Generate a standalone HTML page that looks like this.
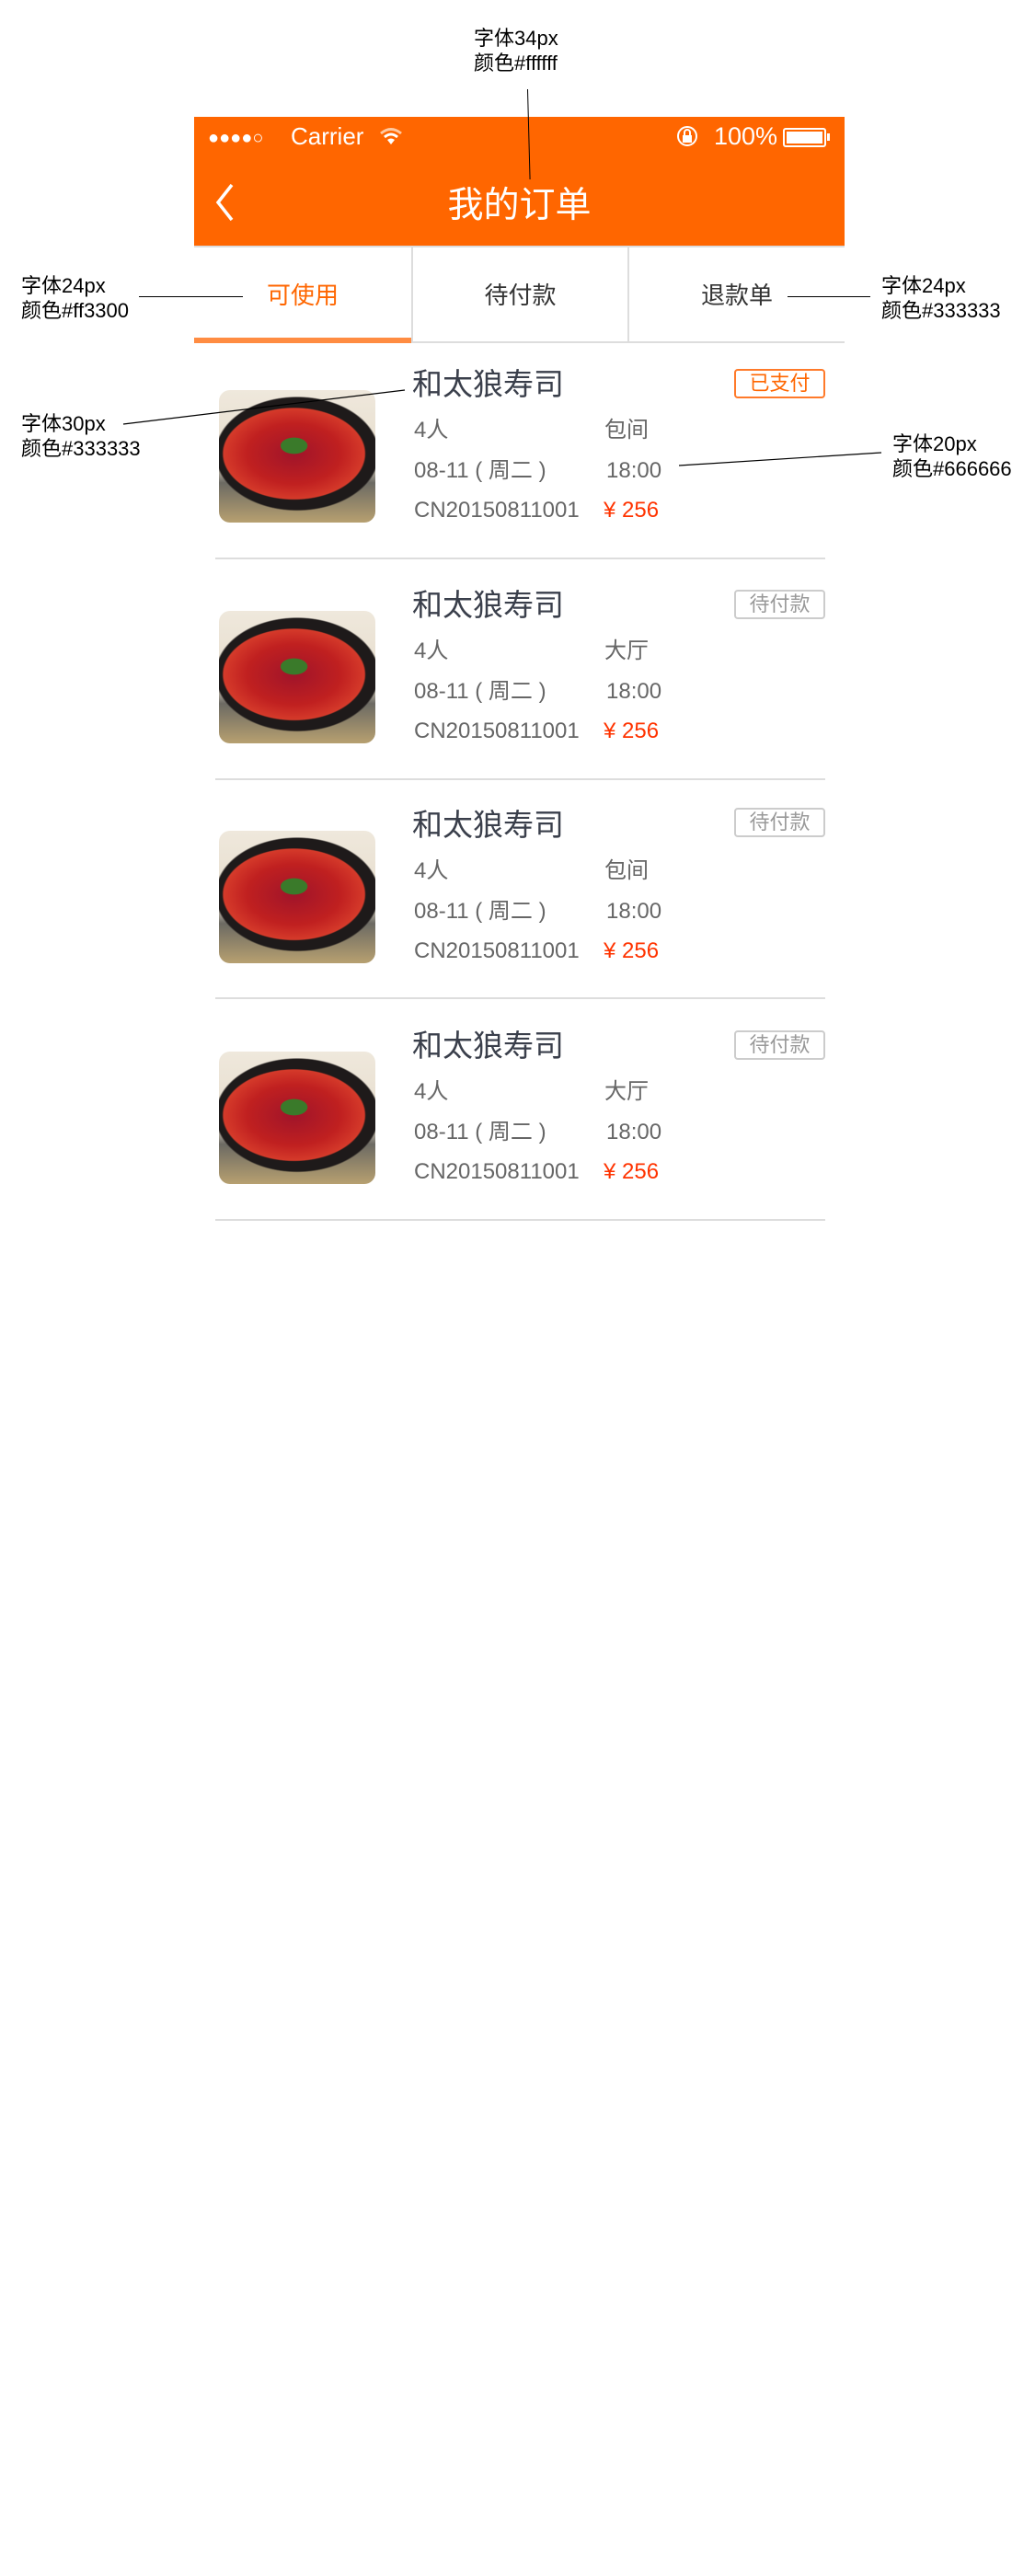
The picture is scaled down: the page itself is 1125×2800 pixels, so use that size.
<!DOCTYPE html>
<html><head><meta charset="utf-8"><style>
*{margin:0;padding:0;box-sizing:border-box}
body{width:1125px;height:2800px;background:#fff;position:relative;overflow:hidden;font-family:"Liberation Sans","Noto Sans CJK SC",sans-serif}
.a{position:absolute;white-space:nowrap}
.ann{position:absolute;font-size:22px;line-height:27px;color:#000;font-family:"Liberation Sans","Noto Sans CJK SC",sans-serif}
.ln{position:absolute;background:#000;height:1px;transform-origin:0 0}
.hdr{position:absolute;left:211px;top:127px;width:707px;height:140px;background:#ff6600}
.tabs{position:absolute;left:211px;top:267px;width:707px;height:106px;border-bottom:2px solid #ddd;border-top:2px solid #ddd}
.tab{position:absolute;top:0;height:104px;font-size:26px;line-height:104px;text-align:center;color:#333}
.food{position:absolute;width:170px;height:144px;border-radius:12px;overflow:hidden;
background:radial-gradient(ellipse 42% 30% at 48% 42%,#3a7a2a 0,#3a7a2a 20%,transparent 21%),
radial-gradient(ellipse 50% 38% at 48% 48%,#a0142a 0,#c02020 60%,#d53a2a 90%,transparent 92%),
radial-gradient(ellipse 56% 46% at 50% 48%,#1e1a1a 0,#1e1a1a 92%,transparent 94%),
linear-gradient(#efe8dc,#e6ddcd 55%,#6c6a63 70%,#b7a070 100%)}
.title{position:absolute;font-size:33px;line-height:40px;height:40px;color:#3a3f4b;white-space:nowrap}
.row{position:absolute;font-size:24px;line-height:30px;height:30px;color:#666;white-space:nowrap}
.price{color:#ff3300}
.badge{position:absolute;left:798px;width:99px;height:32px;border-radius:4px;font-size:22px;line-height:28px;text-align:center}
.sep{position:absolute;left:234px;width:663px;height:2px;background:#ddd}
</style></head><body>

<div class="ann" style="left:515px;top:28px">字体34px<br>颜色#ffffff</div>
<div class="hdr"></div>
<div class="a" style="left:226px;top:139px;font-size:20px;color:#fff;letter-spacing:0px">●●●●○</div>
<div class="a" style="left:316px;top:133px;font-size:26px;color:#fff">Carrier</div>
<svg class="a" style="left:412px;top:137px" width="26" height="22" viewBox="0 0 26 22"><path d="M2 8 Q13 -1 24 8" stroke="#ffc9a0" stroke-width="3" fill="none"/><path d="M6 12 Q13 6 20 12" stroke="#fff" stroke-width="3" fill="none"/><path d="M13 20 L9 15 Q13 12 17 15 Z" fill="#fff"/></svg>
<svg class="a" style="left:735px;top:135px" width="26" height="26" viewBox="0 0 26 26"><circle cx="12" cy="13" r="10" stroke="#fff" stroke-width="2" fill="none"/><rect x="7" y="12" width="10" height="8" fill="#fff"/><path d="M9 12 V9 a3 3 0 0 1 6 0 V12" stroke="#fff" stroke-width="2" fill="none"/></svg>
<div class="a" style="left:776px;top:133px;font-size:27px;color:#fff">100%</div>
<div class="a" style="left:851px;top:139px;width:47px;height:21px;border:2px solid #fff;border-radius:3px;padding:2px"><div style="background:#fff;width:100%;height:100%"></div></div>
<div class="a" style="left:899px;top:145px;width:3px;height:8px;background:#fff"></div>
<svg class="a" style="left:230px;top:198px" width="28" height="44" viewBox="0 0 28 44"><path d="M22 3 L7 22 L22 41" stroke="#fff" stroke-width="3.5" fill="none"/></svg>
<div class="a" style="left:0;width:1125px;top:192px;text-align:center;font-size:39px;color:#fff;padding-left:4px">我的订单</div>
<div class="ln" style="left:574px;top:97px;width:98px;transform:rotate(88.5deg)"></div>

<div class="tabs">
<div class="tab" style="left:0;width:236px;color:#ff6600">可使用</div>
<div class="tab" style="left:236px;width:235px;border-left:2px solid #ddd">待付款</div>
<div class="tab" style="left:471px;width:236px;border-left:2px solid #ddd">退款单</div>
<div class="a" style="left:0;top:98px;width:236px;height:6px;background:#ff8c42"></div>
</div>
<div class="ann" style="left:23px;top:297px">字体24px<br>颜色#ff3300</div>
<div class="ln" style="left:151px;top:322px;width:113px"></div>
<div class="ann" style="left:958px;top:297px">字体24px<br>颜色#333333</div>
<div class="ln" style="left:856px;top:322px;width:90px"></div>

<!-- item 1 -->
<div class="food" style="left:238px;top:424px"></div>
<div class="title" style="left:448px;top:398px">和太狼寿司</div>
<div class="badge" style="top:401px;border:2px solid #ff7a2a;color:#ff6600">已支付</div>
<div class="row" style="left:450px;top:453px">4人</div><div class="row" style="left:657px;top:453px">包间</div>
<div class="row" style="left:450px;top:497px">08-11 ( 周二 )</div><div class="row" style="left:659px;top:497px">18:00</div>
<div class="row" style="left:450px;top:540px">CN20150811001</div><div class="row price" style="left:656px;top:540px">¥ 256</div>
<div class="sep" style="top:606px"></div>

<!-- item 2 -->
<div class="food" style="left:238px;top:664px"></div>
<div class="title" style="left:448px;top:638px">和太狼寿司</div>
<div class="badge" style="top:641px;border:2px solid #ccc;color:#999">待付款</div>
<div class="row" style="left:450px;top:693px">4人</div><div class="row" style="left:657px;top:693px">大厅</div>
<div class="row" style="left:450px;top:737px">08-11 ( 周二 )</div><div class="row" style="left:659px;top:737px">18:00</div>
<div class="row" style="left:450px;top:780px">CN20150811001</div><div class="row price" style="left:656px;top:780px">¥ 256</div>
<div class="sep" style="top:846px"></div>

<!-- item 3 -->
<div class="food" style="left:238px;top:903px"></div>
<div class="title" style="left:448px;top:877px">和太狼寿司</div>
<div class="badge" style="top:878px;border:2px solid #ccc;color:#999">待付款</div>
<div class="row" style="left:450px;top:932px">4人</div><div class="row" style="left:657px;top:932px">包间</div>
<div class="row" style="left:450px;top:976px">08-11 ( 周二 )</div><div class="row" style="left:659px;top:976px">18:00</div>
<div class="row" style="left:450px;top:1019px">CN20150811001</div><div class="row price" style="left:656px;top:1019px">¥ 256</div>
<div class="sep" style="top:1084px"></div>

<!-- item 4 -->
<div class="food" style="left:238px;top:1143px"></div>
<div class="title" style="left:448px;top:1117px">和太狼寿司</div>
<div class="badge" style="top:1120px;border:2px solid #ccc;color:#999">待付款</div>
<div class="row" style="left:450px;top:1172px">4人</div><div class="row" style="left:657px;top:1172px">大厅</div>
<div class="row" style="left:450px;top:1216px">08-11 ( 周二 )</div><div class="row" style="left:659px;top:1216px">18:00</div>
<div class="row" style="left:450px;top:1259px">CN20150811001</div><div class="row price" style="left:656px;top:1259px">¥ 256</div>
<div class="sep" style="top:1325px"></div>

<div class="ann" style="left:23px;top:447px">字体30px<br>颜色#333333</div>
<svg class="a" style="left:0;top:0" width="1125" height="600"><line x1="134" y1="461" x2="440" y2="424" stroke="#000" stroke-width="1.2"/><line x1="738" y1="506" x2="958" y2="492" stroke="#000" stroke-width="1.2"/></svg>
<div class="ann" style="left:970px;top:469px">字体20px<br>颜色#666666</div>
</body></html>
